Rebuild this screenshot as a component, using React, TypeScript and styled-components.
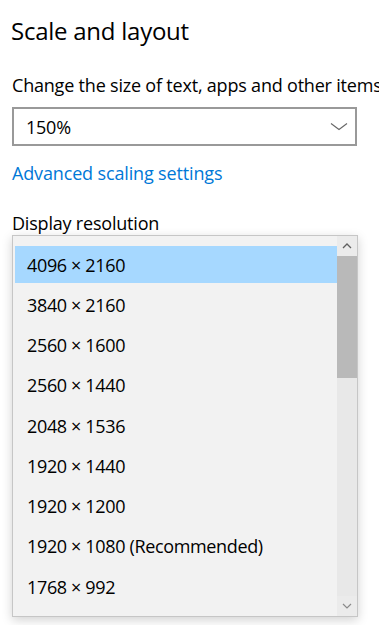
import React from "react";
import styled, { createGlobalStyle } from "styled-components";

const Global = createGlobalStyle`
  html, body { margin: 0; padding: 0; background: #ffffff; }
  body { font-family: "Open Sans", "Noto Sans", sans-serif; color: #000; }
`;

const Page = styled.div`
  width: 379px;
  height: 625px;
  overflow: hidden;
  padding: 0 0 0 12px;
  box-sizing: border-box;
  display: flex;
  flex-direction: column;
`;

const Title = styled.h1`
  margin: 14px 0 0 -1px;
  font-size: 24px;
  font-weight: 400;
  line-height: 34px;
  letter-spacing: -0.25px;
`;

const Label = styled.div<{ $top: number }>`
  margin-top: ${(p) => p.$top}px;
  font-size: 18px;
  line-height: 24px;
  white-space: nowrap;
  letter-spacing: -0.2px;
`;

const Combo = styled.div`
  margin-top: 10px;
  width: 345px;
  height: 39px;
  box-sizing: border-box;
  border: 2px solid #999999;
  display: flex;
  align-items: center;
  justify-content: space-between;
  padding: 0 7px 0 12px;
  font-size: 18px;
  letter-spacing: -0.25px;
`;

const Link = styled.a`
  margin-top: 15px;
  font-size: 18px;
  line-height: 24px;
  color: #0078d7;
  text-decoration: none;
  letter-spacing: -0.15px;
`;

const Popup = styled.div`
  margin-top: 0;
  width: 346px;
  height: 382px;
  box-sizing: border-box;
  border: 1px solid #c6c6c6;
  background: #f2f2f2;
  box-shadow: 0 3px 10px rgba(0, 0, 0, 0.18);
  display: flex;
`;

const List = styled.div`
  flex: 1;
  padding: 10px 0 0 2px;
  display: flex;
  flex-direction: column;
`;

const Item = styled.div<{ $selected?: boolean }>`
  height: 37.25px;
  margin: 0 0 3px 0;
  display: flex;
  align-items: center;
  padding-left: 12px;
  font-size: 18px;
  letter-spacing: -0.35px;
  background: ${(p) => (p.$selected ? "#a6d8ff" : "transparent")};
`;

const ScrollBar = styled.div`
  width: 20px;
  background: #e8e8e8;
  display: flex;
  flex-direction: column;
`;

const ArrowBtn = styled.div`
  height: 20px;
  display: flex;
  align-items: center;
  justify-content: center;
  background: #ebebeb;
`;

const Thumb = styled.div`
  height: 122px;
  background: #b9b9b9;
`;

const Track = styled.div`
  flex: 1;
`;

const items = [
  "4096 × 2160",
  "3840 × 2160",
  "2560 × 1600",
  "2560 × 1440",
  "2048 × 1536",
  "1920 × 1440",
  "1920 × 1200",
  "1920 × 1080 (Recommended)",
  "1768 × 992",
];

export default function App() {
  return (
    <>
      <Global />
      <Page>
        <Title>Scale and layout</Title>
        <Label $top={25}>Change the size of text, apps and other items</Label>
        <Combo>
          <span>150%</span>
          <svg width="18" height="9" viewBox="0 0 18 9">
            <path d="M1 1.5 L9 7.5 L17 1.5" fill="none" stroke="#666" strokeWidth="1.1" />
          </svg>
        </Combo>
        <Link href="#">Advanced scaling settings</Link>
        <Label $top={26}>Display resolution</Label>
        <Popup>
          <List>
            {items.map((t, i) => (
              <Item key={t} $selected={i === 0}>
                {t}
              </Item>
            ))}
          </List>
          <ScrollBar>
            <ArrowBtn>
              <svg width="10" height="6" viewBox="0 0 10 6">
                <path d="M1 5 L5 1 L9 5" fill="none" stroke="#606060" strokeWidth="1.3" />
              </svg>
            </ArrowBtn>
            <Thumb />
            <Track />
            <ArrowBtn>
              <svg width="10" height="6" viewBox="0 0 10 6">
                <path d="M1 1 L5 5 L9 1" fill="none" stroke="#8a8a8a" strokeWidth="1.2" />
              </svg>
            </ArrowBtn>
          </ScrollBar>
        </Popup>
      </Page>
    </>
  );
}
